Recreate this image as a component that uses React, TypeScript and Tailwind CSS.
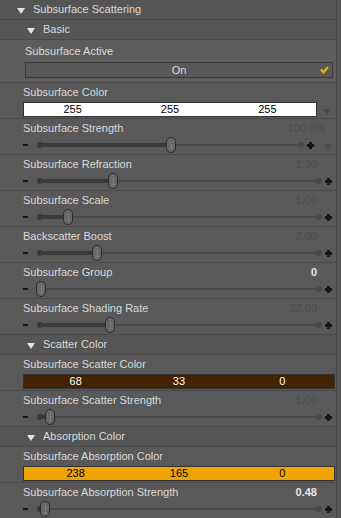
import React from 'react';

type Slider = { kind: 'slider'; label: string; value: string; pos: number; bright?: boolean; arrow?: boolean };
type Color = { kind: 'color'; label: string; rgb: [number, number, number]; bg: string; text: string; arrow?: boolean };
type Header = { kind: 'header'; label: string; level: number };
type Toggle = { kind: 'toggle'; label: string; value: string };
type Row = Slider | Color | Header | Toggle;

const rows: Row[] = [
    { kind: 'header', label: 'Subsurface Scattering', level: 0 },
    { kind: 'header', label: 'Basic', level: 1 },
    { kind: 'toggle', label: 'Subsurface Active', value: 'On' },
    { kind: 'color', label: 'Subsurface Color', rgb: [255, 255, 255], bg: 'bg-white', text: 'text-black', arrow: true },
    { kind: 'slider', label: 'Subsurface Strength', value: '100.0%', pos: 171, arrow: true },
    { kind: 'slider', label: 'Subsurface Refraction', value: '1.30', pos: 113 },
    { kind: 'slider', label: 'Subsurface Scale', value: '1.00', pos: 68 },
    { kind: 'slider', label: 'Backscatter Boost', value: '2.00', pos: 97 },
    { kind: 'slider', label: 'Subsurface Group', value: '0', pos: 41, bright: true },
    { kind: 'slider', label: 'Subsurface Shading Rate', value: '32.00', pos: 110 },
    { kind: 'header', label: 'Scatter Color', level: 1 },
    { kind: 'color', label: 'Subsurface Scatter Color', rgb: [68, 33, 0], bg: 'bg-[#442100]', text: 'text-white' },
    { kind: 'slider', label: 'Subsurface Scatter Strength', value: '1.00', pos: 50 },
    { kind: 'header', label: 'Absorption Color', level: 1 },
    { kind: 'color', label: 'Subsurface Absorption Color', rgb: [238, 165, 0], bg: 'bg-[#eea500]', text: 'text-black' },
    { kind: 'slider', label: 'Subsurface Absorption Strength', value: '0.48', pos: 45, bright: true },
];

function DownTri({ className }: { className: string }) {
    return (
        <svg width="8" height="6" viewBox="0 0 8 6" className={className}>
            <path d="M0 0 H8 L4 6 Z" fill="currentColor" />
        </svg>
    );
}

function SliderBar({ pos, arrow }: { pos: number; arrow?: boolean }) {
    // pos is the thumb centre on the page; track starts at x=38
    const left = pos - 38;
    return (
        <div className="flex items-center h-[16px] mt-[2px] pl-[3px]">
            <div className="w-[5px] h-[2px] bg-[#141414]" />
            <div className="relative flex-1 h-[16px] ml-[10px] mr-[4px]">
                <div className="absolute left-0 right-0 top-[7px] h-[2px] bg-[#4a4a4a]" />
                <div className="absolute left-0 top-[6px] h-[4px] bg-[#3a3a3a] rounded-full" style={{ width: left }} />
                <div className="absolute left-[-1px] top-[5px] w-[6px] h-[6px] rounded-full bg-[#3a3a3a]" />
                <div className="absolute right-[-1px] top-[5px] w-[6px] h-[6px] rounded-full bg-[#4a4a4a]" />
                <div
                    className="absolute top-0 w-[10px] h-[16px] rounded-full border border-[#2c2c2c] bg-[#686868] flex flex-col items-center justify-center gap-[1px]"
                    style={{ left: left - 5 }}
                >
                    <div className="w-[1px] h-[1px] bg-[#9a9a9a]" />
                    <div className="w-[1px] h-[1px] bg-[#9a9a9a]" />
                    <div className="w-[1px] h-[1px] bg-[#9a9a9a]" />
                    <div className="w-[1px] h-[1px] bg-[#9a9a9a]" />
                </div>
            </div>
            <div className="relative w-[7px] h-[7px]">
                <div className="absolute left-0 top-[2px] w-[7px] h-[3px] bg-[#141414]" />
                <div className="absolute left-[2px] top-0 w-[3px] h-[7px] bg-[#141414]" />
            </div>
            {arrow ? <DownTri className="text-[#4b4b4b] ml-[10px] mr-[4px] mt-[4px]" /> : <div className="w-[4px]" />}
        </div>
    );
}

export default function App() {
    return (
        <div className="w-[341px] h-[518px] overflow-hidden bg-[#565656] font-['Liberation_Sans',Arial,sans-serif] text-[11px] text-[#dadada] leading-[14px]">
            {rows.map((r, i) => {
                if (r.kind === 'header') {
                    return (
                        <div key={i} className={`h-[20px] w-[337px] flex items-center border-b border-[#494949] border-r bg-[#555555] ${r.level === 0 ? 'pl-[17px]' : 'pl-[27px]'}`}>
                            <DownTri className="text-[#e4e4e4] mr-[8px] mt-[3px]" />
                            <span className="mt-[-2px]">{r.label}</span>
                        </div>
                    );
                }
                if (r.kind === 'toggle') {
                    return (
                        <div key={i} className="h-[43px] w-[337px] pl-[25px] pr-[3px] pt-[4px] border-b border-r border-[#494949] bg-[#5d5d5d]">
                            <div className="h-[14px]">{r.label}</div>
                            <div className="relative mt-[4px] h-[16px] border border-[#3a3a3a] bg-[#585858] flex items-center justify-center">
                                <span>{r.value}</span>
                                <svg width="9" height="8" viewBox="0 0 9 8" className="absolute right-[3px] top-[3px]">
                                    <path d="M1 3.5 L3.5 6.5 L8 1" stroke="#f2b21a" strokeWidth="2" fill="none" />
                                </svg>
                            </div>
                        </div>
                    );
                }
                if (r.kind === 'color') {
                    return (
                        <div key={i} className="h-[36px] w-[337px] pl-[23px] pt-[2px] border-b border-r border-[#494949] bg-[#595959]">
                            <div className="h-[14px]">{r.label}</div>
                            <div className="flex items-center mt-[3px]">
                                <div className={`flex-1 h-[15px] border border-[#333333] grid grid-cols-3 text-center ${r.bg} ${r.text}`}>
                                    {r.rgb.map((c, j) => (
                                        <span key={j} className="leading-[13px]">{c}</span>
                                    ))}
                                </div>
                                {r.arrow ? <DownTri className="text-[#4b4b4b] ml-[6px] mr-[5px] mt-[4px]" /> : <div className="w-[1px]" />}
                            </div>
                        </div>
                    );
                }
                return (
                    <div key={i} className="h-[36px] w-[337px] pl-[20px] pt-[2px] border-b border-r border-[#494949] bg-[#595959]">
                        <div className={`h-[14px] flex justify-between pl-[3px] ${r.arrow ? 'pr-[11px]' : 'pr-[19px]'}`}>
                            <span>{r.label}</span>
                            <span className={r.bright ? 'text-[#e6e6e6] font-bold' : 'text-[#4c4c4c]'}>{r.value}</span>
                        </div>
                        <SliderBar pos={r.pos} arrow={r.arrow} />
                    </div>
                );
            })}
        </div>
    );
}
